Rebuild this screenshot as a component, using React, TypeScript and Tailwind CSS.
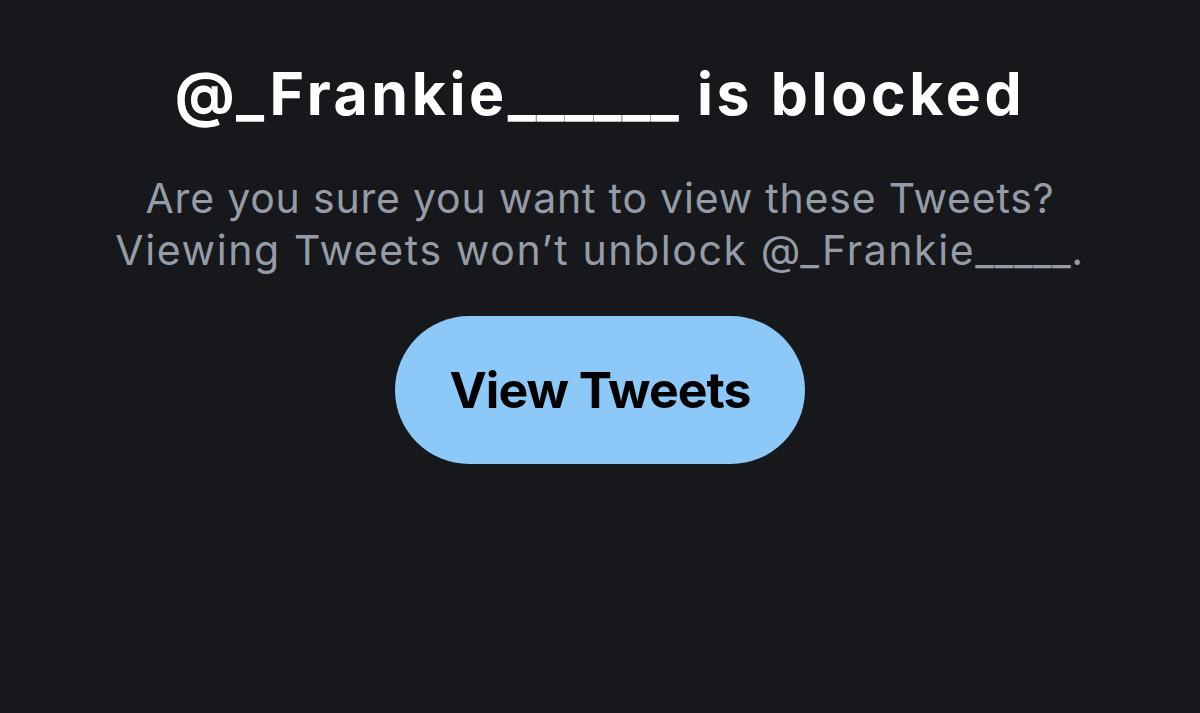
export default function App() {
  return (
    <div className="flex h-[713px] w-[1200px] flex-col items-center bg-[#17181c] pt-[59px] font-['Inter','Noto_Sans',sans-serif]">
      <h1 className="whitespace-nowrap text-[59px] font-bold leading-[70px] tracking-[3.6px] text-white">
        @_Frankie<span className="tracking-[0.5px]">______</span> is blocked
      </h1>
      <p className="mt-[43px] whitespace-nowrap text-center text-[41px] leading-[52px] text-[#959ca6]">
        <span className="tracking-[0.8px]">Are you sure you want to view these Tweets?</span>
        <br />
        <span className="tracking-[1.6px]">
          Viewing Tweets won’t unblock @_Frankie<span className="tracking-[0.5px]">_____</span>.
        </span>
      </p>
      <button className="mt-[40px] flex h-[148px] w-[410px] items-center justify-center rounded-full bg-[#8cc8f8] text-[50px] font-bold tracking-[-1px] text-black">
        View Tweets
      </button>
    </div>
  )
}
